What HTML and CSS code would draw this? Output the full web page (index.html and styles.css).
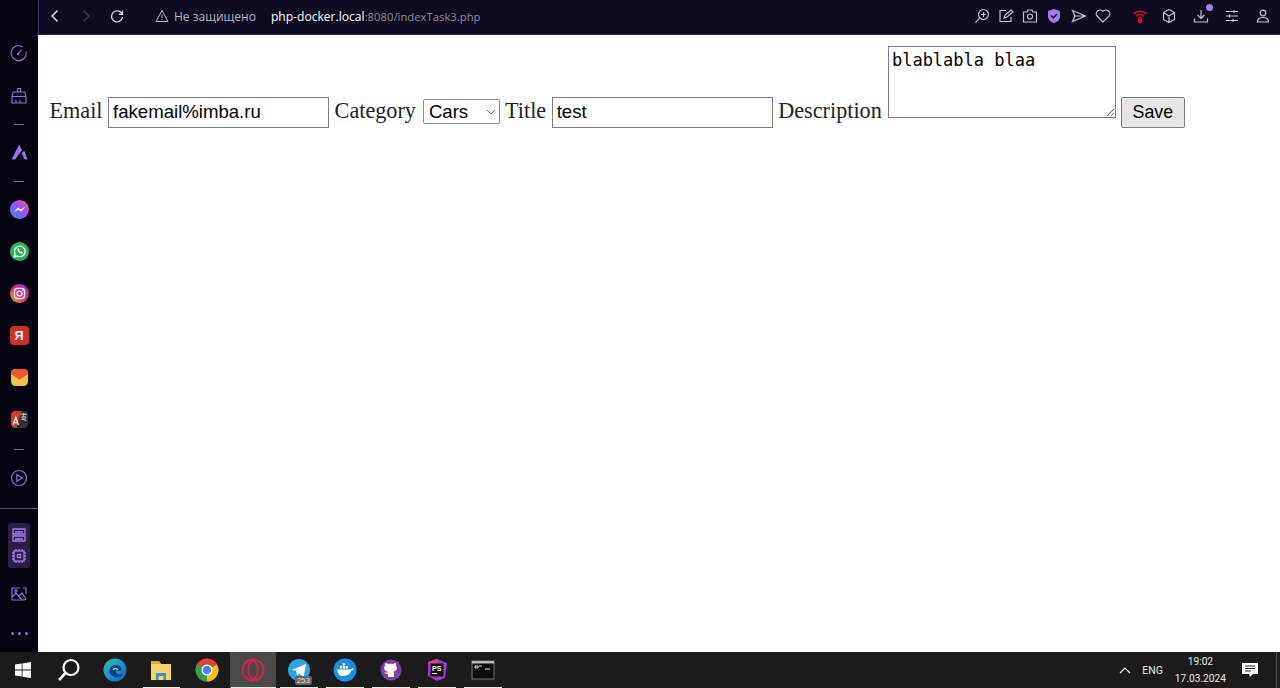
FILE: index.html
```html
<!DOCTYPE html>
<html lang="ru">
<head>
<meta charset="utf-8">
<title>indexTask3</title>
<link rel="stylesheet" href="styles.css">
</head>
<body>
<div class="browser">
  <aside class="sidebar">
    <div class="side-top">
      <svg class="si s1" viewBox="0 0 18 18"><path d="M13 3A7.500 7.500 0 1 0 16 7.500" class="pl"/><path d="M8 10l3.500-4" class="pl"/><circle cx="8" cy="10" r="1.200" fill="#8f6fdc"/><path d="M15 4.500v.1M16.300 7v.1" class="pl"/></svg>
      <svg class="si s2" viewBox="0 0 18 18"><path d="M7.500 5V1.500h3V5M3 5h12l1 5.500v5.500H2v-5.500zM2.300 9.500h13.400M6 16v-3M10 16v-3" class="pl"/></svg>
      <i class="dash d1"></i>
      <svg class="si s3" viewBox="0 0 18 18"><path d="M9.200 1.500l2.800 5.500-6.800 9.500H1.500zM11.500 10l2.800-2.300 3.200 8.800h-3z" fill="#9b72e8"/></svg>
      <i class="dash d2"></i>
      <svg class="si app s4" viewBox="0 0 18 18"><defs><linearGradient id="mg" x1="0" y1="1" x2="1" y2="0"><stop offset="0" stop-color="#2b8cf5"/><stop offset=".55" stop-color="#9a50f0"/><stop offset="1" stop-color="#f0608a"/></linearGradient></defs><circle cx="9" cy="9" r="9" fill="url(#mg)"/><path d="M3.500 11.500l4-4.500 2.500 2 4.500-2.500-4 4.500-2.500-2z" fill="#fff"/></svg>
      <svg class="si app s5" viewBox="0 0 18 18"><circle cx="9" cy="9" r="9" fill="#25b558"/><path d="M4 14l.8-3A5 5 0 1 1 7 13.300z" fill="none" stroke="#fff" stroke-width="1.300"/><path d="M7 6.500c0 2.500 2 4.500 4.500 4.700l.7-1.400-1.600-.8-.6.600-1.600-1.700.5-.6-.7-1.600z" fill="#fff"/></svg>
      <svg class="si app s6" viewBox="0 0 18 18"><defs><linearGradient id="ig" x1="0" y1="1" x2="1" y2="0"><stop offset="0" stop-color="#f5b020"/><stop offset=".45" stop-color="#e1306c"/><stop offset="1" stop-color="#7a35d0"/></linearGradient></defs><circle cx="9" cy="9" r="9" fill="url(#ig)"/><rect x="4.200" y="4.200" width="9.600" height="9.600" rx="2.800" fill="none" stroke="#fff" stroke-width="1.300"/><circle cx="9" cy="9" r="2.300" fill="none" stroke="#fff" stroke-width="1.300"/><circle cx="12" cy="6" r=".7" fill="#fff"/></svg>
      <div class="si app s7 ya">Я</div>
      <svg class="si app s8" viewBox="0 0 18 18"><rect x="1" y="1" width="16" height="16" rx="4" fill="#f2c34e"/><path d="M1 5a4 4 0 0 1 4-4h8a4 4 0 0 1 4 4v1l-8 5-8-5z" fill="#ee5a24"/></svg>
      <svg class="si app s9" viewBox="0 0 18 18"><rect x="1" y="1" width="16" height="16" rx="4" fill="#333"/><path d="M5 1h6L6 17H5a4 4 0 0 1-4-4V5a4 4 0 0 1 4-4z" fill="#d8392b"/><path d="M3 14l2.500-7 2.500 7M3.800 12h3.400" fill="none" stroke="#fff" stroke-width="1.200"/><path d="M10 4h6M13 3v3M11 6.500h4M11 9c1.500 0 4-.5 4-2M11.500 7c.5 1.500 2 2.500 4 3" fill="none" stroke="#ddd" stroke-width=".9"/></svg>
      <i class="dash d3"></i>
      <svg class="si s10" viewBox="0 0 18 18"><circle cx="9" cy="9" r="7.500" class="pl"/><path d="M6.800 5.700L12.500 9l-5.700 3.300z" class="pl"/></svg>
    </div>
    <hr class="side-rule">
    <div class="side-group">
      <svg class="gi" viewBox="0 0 16 16"><path d="M2 2h12v5H2zM2 9h12v5H2z" class="pg"/><path d="M4 5h8M4 12h8" class="pg"/></svg>
      <svg class="gi" viewBox="0 0 16 16"><rect x="3" y="3" width="10" height="10" class="pg"/><rect x="6.500" y="6.500" width="3" height="3" class="pg"/><path d="M5 1v2M8 1v2M11 1v2M5 13v2M8 13v2M11 13v2M1 5h2M1 8h2M1 11h2M13 5h2M13 8h2M13 11h2" class="pg"/></svg>
    </div>
    <svg class="si s11" viewBox="0 0 18 18"><path d="M10 3H2v12h12l2-1M13 3h3v6" class="pl"/><path d="M2 12l4-4 6 7M9 11l3-3 4 6" class="pl"/><circle cx="6" cy="6" r="1.200" class="pl"/></svg>
    <div class="dots"><i></i><i></i><i></i></div>
  </aside>
  <div class="main">
    <header class="topbar">
      <div class="nav">
        <svg class="ni" viewBox="0 0 16 16"><path d="M10.500 2.500L5 8l5.500 5.500" class="wl"/></svg>
        <svg class="ni forward" viewBox="0 0 16 16"><path d="M5.500 2.500L11 8l-5.500 5.500" class="wl dim"/></svg>
        <svg class="ni reload" viewBox="0 0 16 16"><path d="M13 6a5.500 5.500 0 1 0 .5 3M13.500 2.500V6.300H9.800" class="wl thin"/></svg>
      </div>
      <svg class="warn" viewBox="0 0 14 14"><path d="M7 1.500L13 12.500H1zM7 5.500v3.500M7 10.300v.8" class="wl thinner"/></svg>
      <span class="secure">Не защищено</span>
      <span class="url"><b>php-docker.local</b>:8080/indexTask3.php</span>
      <div class="tools">
        <svg class="ti t1" viewBox="0 0 16 16"><circle cx="9.500" cy="6.500" r="5" class="gl"/><path d="M5.800 10.200L1.500 14.500M9.500 4v5M7 6.500h5" class="gl"/></svg>
        <svg class="ti t2" viewBox="0 0 16 16"><path d="M8 2.500H2v11h11V9M6 10l1-3 6-5 2 2-6 5z" class="gl"/></svg>
        <svg class="ti t3" viewBox="0 0 16 16"><path d="M1.500 4h3.500l1-2h4l1 2h3.500v10h-13z" class="gl"/><circle cx="8" cy="8.500" r="2.500" class="gl"/></svg>
        <svg class="ti t4" viewBox="0 0 16 16"><path d="M8 1l6 2v5.500c0 3-2.500 5.500-6 6.500-3.500-1-6-3.500-6-6.500V3z" fill="#a57bf2"/><path d="M5 7.500l2.300 2.300L11 6" fill="none" stroke="#1a1235" stroke-width="1.600"/></svg>
        <svg class="ti t5" viewBox="0 0 16 16"><path d="M1.500 2.500L14.500 8 1.500 13.500 4 8zM4 8h10" class="gl"/></svg>
        <svg class="ti t6" viewBox="0 0 16 16"><path d="M8 14L2 8a3.600 3.600 0 0 1 6-4.500A3.600 3.600 0 0 1 14 8z" class="gl"/></svg>
        <svg class="ti t7" viewBox="0 0 16 16"><path d="M1.500 6a9 9 0 0 1 13 0M4 8.300a5.500 5.500 0 0 1 8 0" fill="none" stroke="#d3141c" stroke-width="1.500"/><ellipse cx="8" cy="12" rx="2.300" ry="3.500" fill="#d3141c"/><path d="M8 10v2" stroke="#40040a"/></svg>
        <svg class="ti t8" viewBox="0 0 16 16"><path d="M8 1.500l5.500 3v7L8 14.500l-5.500-3v-7zM2.500 4.500L8 8l5.500-3.500M8 8v6.500" class="gl"/></svg>
        <span class="dl"><svg class="ti" viewBox="0 0 16 16"><path d="M8 2v8.500M4.500 7L8 10.500 11.500 7M1.500 10.500v3.500h13v-3.500" class="gl"/></svg><i class="dl-dot"></i></span>
        <svg class="ti t10" viewBox="0 0 16 16"><path d="M2 3.500h12M2 8h12M2 12.500h12M10 2v3M5.500 6.500v3M9 11v3" class="gl"/></svg>
        <svg class="ti t11" viewBox="0 0 16 16"><circle cx="8" cy="5" r="2.800" class="gl"/><path d="M2.500 14c0-3 2-4.500 5.500-4.500s5.500 1.500 5.500 4.500z" class="gl"/></svg>
      </div>
    </header>
    <form class="page">
      <label class="lab">Email</label>
      <input class="field" type="text" value="fakemail%imba.ru">
      <label class="lab">Category</label>
      <select class="sel"><option>Cars</option></select>
      <label class="lab">Title</label>
      <input class="field" type="text" value="test">
      <label class="lab">Description</label>
      <textarea class="area">blablabla blaa</textarea>
      <button class="save" type="button">Save</button>
    </form>
  </div>
</div>
<footer class="taskbar">
  <div class="slot"><svg class="tb win" viewBox="0 0 16 16"><path d="M0 2.500l6.700-1v6H0zM7.500 1.400L16 0v7.500H7.500zM0 8.500h6.700v6l-6.700-1zM7.500 8.500H16V16l-8.500-1.300z" fill="#fff"/></svg></div>
  <div class="slot"><svg class="tb" viewBox="0 0 24 24"><circle cx="14" cy="9.500" r="7.500" fill="none" stroke="#fff" stroke-width="2.200"/><path d="M8.500 15L2 22" stroke="#fff" stroke-width="2.600"/></svg></div>
  <div class="slot"><svg class="tb" viewBox="0 0 24 24"><defs><linearGradient id="eg" x1="0" y1="0" x2="1" y2="1"><stop offset="0" stop-color="#35c48a"/><stop offset=".55" stop-color="#1a8fd8"/><stop offset="1" stop-color="#0f5aa8"/></linearGradient></defs><circle cx="12" cy="12" r="11.500" fill="url(#eg)"/><path d="M7 16c-2-4 1-9 6-9 4 0 6 3 5.500 5.500-1 .5-4 .5-6 0 0 3 3 5 7 3.500-2 4-8 5-12.500 0z" fill="#0c3f80"/><path d="M10 12c1-2 4-2 5 0" stroke="#7fe0b0" stroke-width="1.500" fill="none"/></svg></div>
  <div class="slot run run-files"><svg class="tb" viewBox="0 0 24 24"><path d="M2 3h8l2 3h10v16H2z" fill="#f6d36b"/><path d="M2 3h8l2 3H2z" fill="#e0a92e"/><path d="M7 22v-7h10v7h-2.500v-4h-5v4z" fill="#3c8fc9"/></svg></div>
  <div class="slot"><svg class="tb" viewBox="0 0 24 24"><circle cx="12" cy="12" r="11.500" fill="#db4437"/><path d="M12 12L22 6.500A11.500 11.500 0 0 1 12 23.500z" fill="#f4c20d"/><path d="M12 12L12 23.500A11.500 11.500 0 0 1 2 6.500z" fill="#2f9e4f"/><circle cx="12" cy="12" r="5.500" fill="#fff"/><circle cx="12" cy="12" r="4.300" fill="#4285f4"/></svg></div>
  <div class="slot active"><svg class="tb" viewBox="0 0 24 24"><ellipse cx="12" cy="12" rx="10.500" ry="10.500" fill="none" stroke="#d1264a" stroke-width="2"/><ellipse cx="12" cy="12" rx="4.800" ry="9" fill="none" stroke="#d1264a" stroke-width="1.800"/></svg></div>
  <div class="slot run tg"><svg class="tb" viewBox="0 0 24 24"><circle cx="12" cy="12" r="11" fill="#2ca5e0"/><path d="M4.500 12L19 6l-2.500 13-4.500-3.500-2 2-1-5z" fill="#fff"/></svg><span class="badge">253</span></div>
  <div class="slot run"><svg class="tb" viewBox="0 0 24 24"><circle cx="12" cy="12" r="11.500" fill="#1d8fe0"/><path d="M4 11.500h13c1 0 2-.8 2.500-1.500.8.400 1.200 1 1 1.800-.6.700-1.500.9-2.300.8-1 3.400-3.600 5.400-8 5.400-3.500 0-5.500-2-6.200-6.500z" fill="#fff"/><path d="M7 8h2.200v2.400H7zM9.800 8H12v2.400H9.800zM12.600 8h2.200v2.400h-2.200zM9.800 5.200H12v2.200H9.800z" fill="#fff"/></svg></div>
  <div class="slot run"><svg class="tb" viewBox="0 0 24 24"><circle cx="12" cy="12" r="10.500" fill="#7b3fa8"/><path d="M9 19v-3c-2.500.5-3-1-3.500-2 1 .2 1.500 1 2.500 1 .2-.6.500-1 1-1.300-2.500-.4-3.800-1.600-3.800-4 0-1 .3-1.800 1-2.500-.2-.7-.1-1.500.2-2.200 1 0 1.800.5 2.500 1 1.800-.5 3.400-.5 5.200 0 .7-.5 1.500-1 2.500-1 .3.700.4 1.500.2 2.200.7.700 1 1.500 1 2.500 0 2.400-1.300 3.600-3.800 4 .6.400 1 1 1 2V19z" fill="#fff"/></svg></div>
  <div class="slot run"><svg class="tb" viewBox="0 0 24 24"><path d="M3 4l9-3 10 4-2 15-8 3-9-5z" fill="#a03bd0"/><path d="M3 4l9-3 2 4-9 3z" fill="#e0418f"/><rect x="5.500" y="5.500" width="13" height="13" fill="#111"/><text x="7" y="12.500" class="ps">PS</text><path d="M7 15.500h5" stroke="#fff"/></svg></div>
  <div class="slot run"><svg class="tb" viewBox="0 0 24 24"><rect x="1" y="3" width="22" height="18" fill="#0c0c0c" stroke="#777"/><path d="M1 3h22v2.500H1z" fill="#bbb"/><path d="M4 8h3v2H4zM8 8h3M14 11h5" stroke="#ddd" fill="none"/></svg></div>
  <div class="tray">
    <svg class="caret" viewBox="0 0 12 8"><path d="M1 7l5-5 5 5" fill="none" stroke="#eee" stroke-width="1.200"/></svg>
    <span class="lang">ENG</span>
    <div class="clock"><span>19:02</span><span>17.03.2024</span></div>
    <svg class="note" viewBox="0 0 16 16"><path d="M0 1h16v11h-5l-3 3-1-3H0z" fill="#fff"/><path d="M3 4h10M3 6.500h10M3 9h6" stroke="#222"/></svg>
    <i class="desk"></i>
  </div>
</footer>
</body>
</html>
```
FILE: styles.css
```css
* { box-sizing: border-box; }
html, body { margin: 0; height: 688px; overflow: hidden; background: #fff; }
body { display: flex; flex-direction: column; font-family: "Liberation Serif", serif; }

.pl { fill: none; stroke: #8f6fdc; stroke-width: 1.200; }
.pg { fill: none; stroke: #a67cf0; stroke-width: 1.300; }
.wl { fill: none; stroke: #d6d6e0; stroke-width: 1.500; }
.wl.dim { stroke: #3a3850; }
.wl.thin { stroke-width: 1.300; }
.wl.thinner { stroke-width: 1; stroke: #bdbdc8; }
.gl { fill: none; stroke: #c4c2d0; stroke-width: 1.200; }

.browser { flex: 0 0 652px; display: flex; min-height: 0; }

.sidebar { flex: 0 0 38px; background: #05030f; display: flex; flex-direction: column; align-items: center; }
.side-top { display: flex; flex-direction: column; align-items: center; padding-top: 44px; height: 508px; }
.si { width: 18px; height: 18px; display: block; flex: none; }
.si.app { width: 19px; height: 19px; }
.s2 { margin-top: 25px; }
.dash { display: block; width: 10px; height: 1px; background: #8068b8; flex: none; }
.d1 { margin-top: 19px; }
.s3 { margin-top: 18px; }
.d2 { margin-top: 20px; }
.s4 { margin-top: 18px; }
.s5, .s6, .s7, .s8, .s9 { margin-top: 23px; }
.d3 { margin-top: 20px; }
.s10 { margin-top: 19px; }
.ya { background: #d02f26; border-radius: 4px; color: #fff; font: 700 13px/19px "Liberation Sans", sans-serif; text-align: center; }
.side-rule { width: 100%; margin: 0; border: 0; height: 1px; background: #54525e; flex: none; }
.side-group { margin-top: 14px; width: 22px; height: 45px; background: #2a2045; border-radius: 3px; display: flex; flex-direction: column; align-items: center; justify-content: space-between; padding: 4px 0; }
.gi { width: 16px; height: 16px; display: block; }
.s11 { margin-top: 17px; }
.dots { margin-top: 29px; display: flex; gap: 4px; }
.dots i { width: 3px; height: 3px; border-radius: 50%; background: #8f6fdc; display: block; }

.main { flex: 1; min-width: 0; display: flex; flex-direction: column; }
.topbar { flex: 0 0 35px; background: #0e0b20; border-left: 1px solid #4a3a78; border-bottom: 1px solid #2c2a3c; padding-bottom: 2px; display: flex; align-items: center; color: #c9c9d2; font: 12px "Open Sans", sans-serif; }
.nav { display: flex; align-items: center; gap: 15px; padding-left: 8px; }
.ni { width: 16px; height: 16px; display: block; }
.warn { width: 14px; height: 14px; margin-left: 30px; }
.secure { margin-left: 5px; font-size: 12px; color: #b6b6c0; }
.url { margin-left: 15px; font-size: 11.300px; color: #8d8b9c; }
.url b { font-weight: 400; font-size: 12.100px; color: #fff; }
.tools { margin-left: auto; display: flex; align-items: center; padding-right: 9px; gap: 8px; }
.ti { width: 16px; height: 16px; display: block; flex: none; }
.t5 { margin-left: 1px; }
.t7 { margin-left: 13px; }
.t8 { margin-left: 5px; }
.dl { position: relative; display: block; margin-left: 8px; }
.dl-dot { position: absolute; top: -4px; right: -4px; width: 7px; height: 7px; border-radius: 50%; background: #a57bf2; }
.t10 { margin-left: 7px; }
.t11 { margin-left: 7px; }

.page { flex: 1; background: #fff; padding: 11px 0 0 11.500px; font-size: 22.200px; color: #111; white-space: nowrap; }
.lab { color: #222; }
.field { width: 221px; height: 31px; border: 1px solid #7d7d7d; padding: 1px 4px; font: 18.600px "Liberation Sans", sans-serif; color: #000; background: #fff; }
.sel { appearance: none; width: 77px; height: 25px; margin-left: 1.400px; border: 1px solid #8a8a8a; border-radius: 2px; background: #fff url("data:image/svg+xml,%3Csvg xmlns='http://www.w3.org/2000/svg' width='10' height='6'%3E%3Cpath d='M1 1l4 4 4-4' fill='none' stroke='%23666'/%3E%3C/svg%3E") no-repeat right 3px center; font: 18.600px "Liberation Sans", sans-serif; color: #000; padding: 0 0 0 5px; }
.area { width: 228px; height: 72px; margin-left: .6px; border: 1px solid #7d7d7d; padding: 3px 3px; font: 17px "DejaVu Sans Mono", monospace; color: #000; vertical-align: baseline; }
.save { width: 64px; height: 31px; margin-left: -.6px; padding: 0; border: 1px solid #7d7d7d; border-radius: 2px; background: #e6e6e6; font: 17.800px "Liberation Sans", sans-serif; color: #000; }

.taskbar { flex: 0 0 36px; background: #1b1b1b; display: flex; align-items: stretch; }
.slot { flex: 0 0 46px; position: relative; display: flex; align-items: center; justify-content: center; }
.active { background: #4a4a4a; }
.active::after, .run::after { content: ""; position: absolute; left: 4px; right: 4px; bottom: 0; height: 1px; background: #e8f0d8; }
.active::after { left: 1px; right: 0; }
.run-files::after { left: 5px; }
.tb { width: 24px; height: 24px; display: block; }
.win { width: 16px; height: 16px; }
.ps { font: 700 7px "Liberation Sans", sans-serif; fill: #fff; }
.badge { position: absolute; right: 10px; bottom: 3px; padding: 0 2px; background: #666; border-radius: 2px; color: #ddd; font: 8px/9px "Liberation Sans", sans-serif; }
.tray { margin-left: auto; display: flex; align-items: center; color: #e8e8e8; font: 10.200px Roboto, sans-serif; }
.caret { width: 12px; height: 8px; margin-right: 11px; }
.lang { margin-right: 12px; font-size: 10.500px; }
.clock { display: flex; flex-direction: column; align-items: center; line-height: 17px; }
.note { width: 16px; height: 16px; margin: 0 22px 0 16px; }
.desk { position: absolute; right: 3px; bottom: 0; width: 1px; height: 36px; background: #4a4a4a; }
```
